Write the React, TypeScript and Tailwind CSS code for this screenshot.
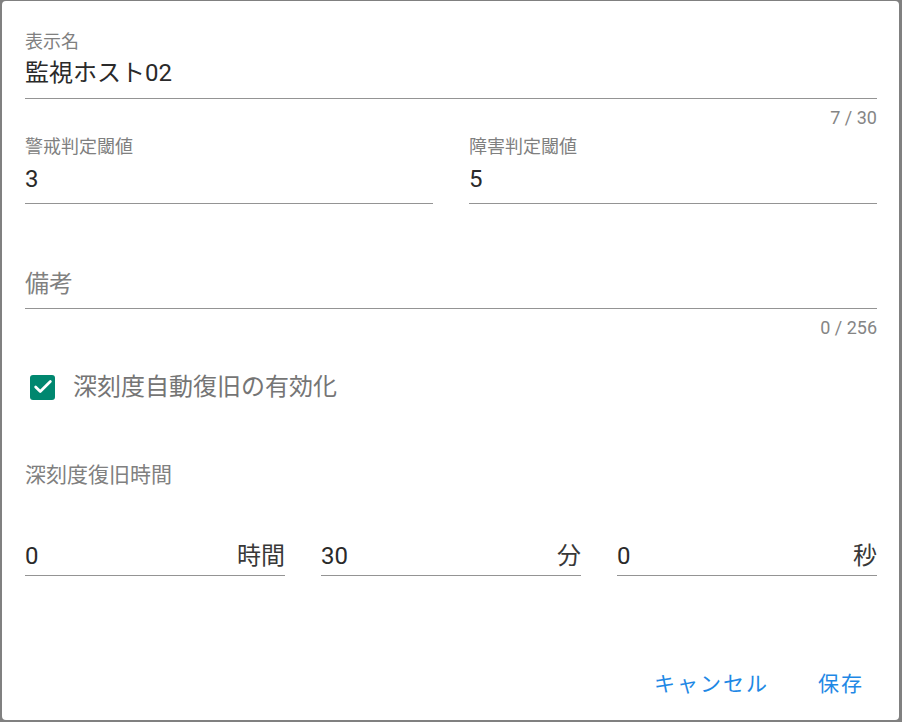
import { Check } from "lucide-react";

const FONT = "font-['Roboto','Noto_Sans_CJK_JP',sans-serif]";

function Underlined({
  value,
  suffix,
  placeholder,
}: {
  value?: string;
  suffix?: string;
  placeholder?: string;
}) {
  return (
    <div className="flex h-[32px] items-center justify-between text-[24px] leading-[32px]">
      {value ? (
        <span className="text-[#2a2a2a]">{value}</span>
      ) : (
        <span className="text-[#808080]">{placeholder}</span>
      )}
      {suffix && <span className="text-[#383838]">{suffix}</span>}
    </div>
  );
}

function Counter({ text }: { text: string }) {
  return (
    <div className="mt-[9px] h-[20px] text-right text-[18px] leading-[20px] text-[#858585]">
      {text}
    </div>
  );
}

export default function App() {
  return (
    <div className={`h-[722px] w-[902px] bg-[#808080] pb-[2px] pl-[2px] pr-[3px] pt-[1px] ${FONT}`}>
      <div className="flex h-full flex-col rounded-[4px] bg-white pl-[23px] pr-[22px] pt-[29px]">
        {/* 表示名 */}
        <div className="border-b border-[#949494] pb-[9px]">
          <div className="h-[24px] text-[18px] leading-[24px] text-[#808080]">表示名</div>
          <div className="mt-[3px]">
            <Underlined value="監視ホスト02" />
          </div>
        </div>
        <Counter text="7 / 30" />

        {/* 閾値 */}
        <div className="mt-[7px] grid grid-cols-2 gap-[36px]">
          <div className="border-b border-[#949494] pb-[8px]">
            <div className="h-[24px] text-[18px] leading-[24px] text-[#808080]">警戒判定閾値</div>
            <div className="mt-[4px]">
              <Underlined value="3" />
            </div>
          </div>
          <div className="border-b border-[#949494] pb-[8px]">
            <div className="h-[24px] text-[18px] leading-[24px] text-[#808080]">障害判定閾値</div>
            <div className="mt-[4px]">
              <Underlined value="5" />
            </div>
          </div>
        </div>

        {/* 備考 */}
        <div className="mt-[64px] border-b border-[#949494] pb-[8px]">
          <Underlined placeholder="備考" />
        </div>
        <Counter text="0 / 256" />

        {/* checkbox */}
        <label className="mt-[33px] flex h-[32px] items-center">
          <span className="ml-[5px] flex h-[25px] w-[25px] items-center justify-center rounded-[3px] bg-[#00876f]">
            <Check className="h-[22px] w-[22px] text-white" strokeWidth={3} />
          </span>
          <span className="ml-[18px] text-[24px] leading-[32px] text-[#757575]">
            深刻度自動復旧の有効化
          </span>
        </label>

        <div className="mt-[58px] h-[28px] text-[21px] leading-[28px] text-[#808080]">深刻度復旧時間</div>

        <div className="mt-[51px] grid grid-cols-3 gap-[36px]">
          <div className="border-b border-[#949494] pb-[3px]">
            <Underlined value="0" suffix="時間" />
          </div>
          <div className="border-b border-[#949494] pb-[3px]">
            <Underlined value="30" suffix="分" />
          </div>
          <div className="border-b border-[#949494] pb-[3px]">
            <Underlined value="0" suffix="秒" />
          </div>
        </div>

        <div className="mt-auto mb-[18px] flex justify-end gap-[17px]">
          <button className="h-[36px] px-[16px] text-[21px] leading-[36px] tracking-[2px] text-[#1e88e5]">キャンセル</button>
          <button className="h-[36px] pl-[16px] pr-[13px] text-[21px] leading-[36px] tracking-[2px] text-[#1e88e5]">保存</button>
        </div>
      </div>
    </div>
  );
}
